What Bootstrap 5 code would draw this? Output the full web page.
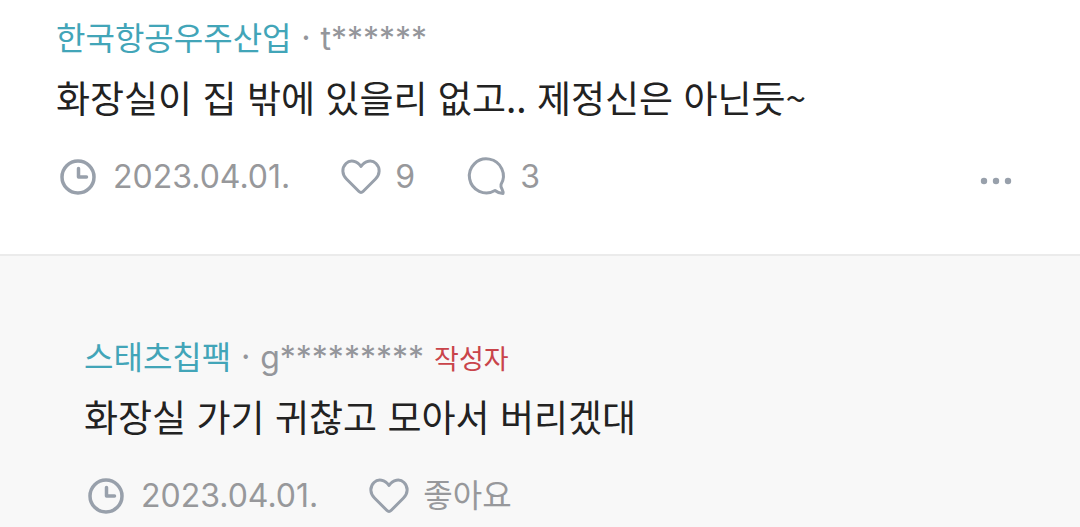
<!DOCTYPE html>
<html lang="ko">
<head>
<meta charset="utf-8">
<meta name="viewport" content="width=device-width, initial-scale=1">
<title>댓글</title>
<link href="https://cdn.jsdelivr.net/npm/bootstrap@5.3.0/dist/css/bootstrap.min.css" rel="stylesheet">
<style>
  body { font-family: "Noto Sans CJK KR", sans-serif; color: #222; background: #f8f8f8; }
  .comment { padding: 14px 62px 55px 56px; background: #fff; border-bottom: 2px solid #ebebeb; }
  .reply { padding: 77px 62px 8px 84px; }
  .author { font-size: 32px; line-height: 44px; color: #94969b; }
  .author-sep { margin: 0 10px; }
  .company { color: #42a5b8; }
  .nick { font-family: Inter, sans-serif; line-height: 32px; }
  .writer { font-size: 27px; line-height: 32px; color: #c9444a; margin-left: 10px; }
  .message { font-size: 37px; line-height: 52px; margin: 13px 0 32px; }
  .meta { font-family: Inter, "Noto Sans CJK KR", sans-serif; font-size: 32px; line-height: 44px; color: #97989b; }
  .meta svg { width: 44px; height: 44px; fill: none; stroke: #98a0ab; stroke-width: 3.5; stroke-linecap: round; stroke-linejoin: round; flex: none; }
  .date { margin-left: 13px; }
  .action { font-size: 32px; line-height: 44px; color: inherit; }
  .action-like, .action-reply { margin-left: 49px; }
  .action-count { margin-left: 12px; }
  .meta .dots { fill: #98a0ab; stroke: none; }
</style>
</head>
<body>
<svg class="d-none" aria-hidden="true">
  <symbol id="clock" viewBox="0 0 44 44"><circle cx="22" cy="22" r="16"/><path d="M22.500 13.500V22H30.500"/></symbol>
  <symbol id="heart" viewBox="0 0 44 44"><path stroke-width="3" d="M22 11.500C18 5.500 11 4.500 7 8.500C2.500 13 3 19.500 7.500 24L20 36.500Q22 38.500 24 36.500L36.500 24C41 19.500 41.500 13 37 8.500C33 4.500 26 5.500 22 11.500Z"/></symbol>
  <symbol id="bubble" viewBox="0 0 44 44"><path stroke-width="3" d="M37 29.500A17 17 0 1 0 31 35.500C33.500 37.500 36 38.500 39 38.500C40 35.500 36 33 37 29.500Z"/></symbol>
</svg>
<main>
  <article class="comment">
    <div class="author d-flex align-items-baseline">
      <a href="#" class="company text-decoration-none">한국항공우주산업</a>
      <span class="author-sep">·</span>
      <span class="nick">t******</span>
    </div>
    <p class="message">화장실이 집 밖에 있을리 없고.. 제정신은 아닌듯~</p>
    <div class="meta d-flex align-items-center">
      <svg aria-hidden="true"><use href="#clock"/></svg>
      <time class="date" datetime="2023-04-01">2023.04.01.</time>
      <button type="button" class="action action-like btn border-0 p-0 d-flex"><svg aria-hidden="true"><use href="#heart"/></svg><span class="action-count">9</span></button>
      <button type="button" class="action action-reply btn border-0 p-0 d-flex"><svg aria-hidden="true"><use href="#bubble"/></svg><span class="action-count">3</span></button>
      <button type="button" class="action btn border-0 p-0 ms-auto d-flex" aria-label="더보기"><svg class="dots" aria-hidden="true" viewBox="0 0 44 44"><circle cx="10" cy="26" r="3.200"/><circle cx="22" cy="26" r="3.200"/><circle cx="34" cy="26" r="3.200"/></svg></button>
    </div>
  </article>
  <article class="reply">
    <div class="author d-flex align-items-baseline">
      <a href="#" class="company text-decoration-none">스태츠칩팩</a>
      <span class="author-sep">·</span>
      <span class="nick">g*********</span>
      <span class="writer">작성자</span>
    </div>
    <p class="message">화장실 가기 귀찮고 모아서 버리겠대</p>
    <div class="meta d-flex align-items-center">
      <svg aria-hidden="true"><use href="#clock"/></svg>
      <time class="date" datetime="2023-04-01">2023.04.01.</time>
      <button type="button" class="action action-like btn border-0 p-0 d-flex"><svg aria-hidden="true"><use href="#heart"/></svg><span class="action-count">좋아요</span></button>
    </div>
  </article>
</main>
</body>
</html>
